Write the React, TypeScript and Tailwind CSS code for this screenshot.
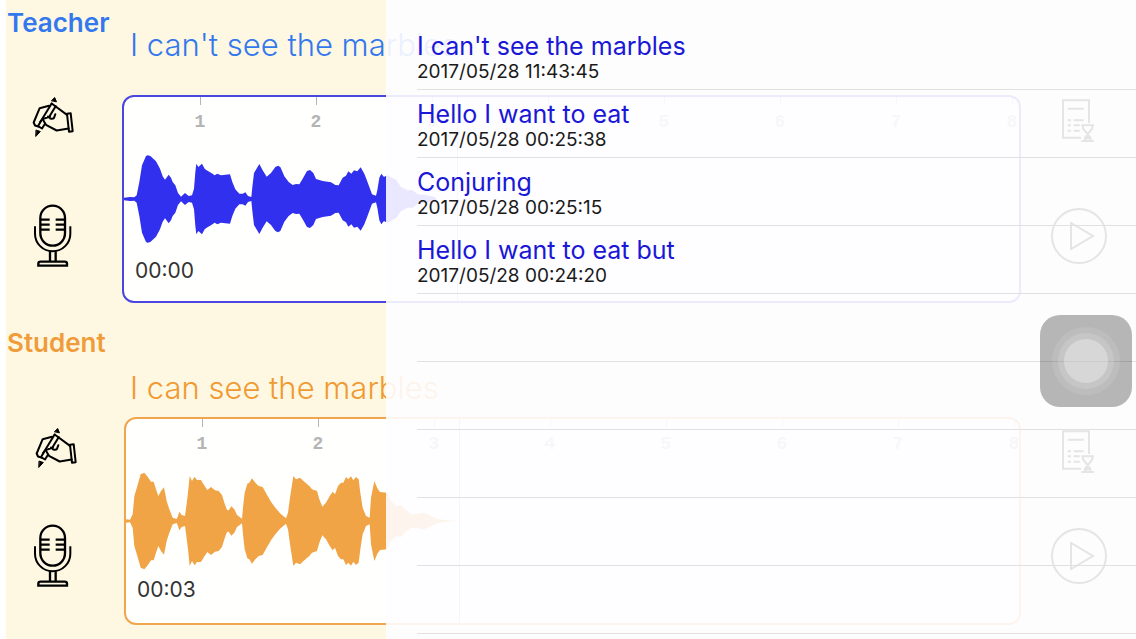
import { clsx } from "clsx";

const TEACHER_WAVE =
  "24,4 42,6 55,5 62,11 70,51 78,101 90,129 95,131 103,129 120,113 132,91 140,68 147,58 158,73 165,64 170,51 178,41 186,18 195,7 207,18 218,9 228,11 234,31 238,81 241,106 247,96 258,106 266,91 272,86 286,78 296,71 304,76 315,71 342,74 349,51 358,29 370,16 380,16 388,20 396,9 406,6 409,36 414,78 430,105 440,86 452,67 465,78 478,96 486,100 493,96 505,68 518,51 530,42 540,45 550,44 560,61 573,84 582,87 592,78 600,60 620,54 645,50 658,42 668,41 680,64 690,70 697,83 706,76 714,86 724,83 734,95 745,76 752,58 762,31 768,14 780,10 784,26 790,64 796,76 804,66 813,71 840,58 855,36 875,26 890,26 905,14 930,12 955,6 962,0";

const STUDENT_WAVE =
  "30,5 42,4 50,20 55,75 64,105 74,140 85,145 95,133 105,118 113,118 120,95 127,75 135,90 144,101 152,60 160,35 170,10 182,6 186,15 190,28 197,18 207,15 211,45 216,85 221,135 228,120 236,133 243,123 255,123 264,108 274,93 285,102 297,92 308,90 318,78 325,55 333,33 338,32 346,44 355,35 363,18 378,7 382,50 386,85 394,112 400,115 408,128 418,115 428,105 440,102 452,80 465,58 478,40 492,23 510,8 516,25 522,70 532,135 540,125 552,130 565,118 580,105 588,95 603,90 610,65 619,43 630,55 640,73 650,88 657,80 666,105 675,115 682,115 690,132 697,125 705,134 712,122 720,132 728,125 733,85 740,40 750,15 761,10 765,70 775,120 784,98 792,87 813,85 825,60 840,45 855,48 870,32 885,20 905,22 925,25 945,15 965,6 990,2 1020,1";

const recordings = [
  { title: "I can't see the marbles", date: "2017/05/28 11:43:45" },
  { title: "Hello I want to eat", date: "2017/05/28 00:25:38" },
  { title: "Conjuring", date: "2017/05/28 00:25:15" },
  { title: "Hello I want to eat but", date: "2017/05/28 00:24:20" },
];

const emptyRows = [1, 2, 3, 4, 5];
const seconds = [1, 2, 3, 4, 5, 6, 7, 8];

function HandIcon() {
  return (
    <svg viewBox="94 52 126 122" className="h-[41px] w-[42px]" fill="none" stroke="#000" strokeWidth="6" strokeLinejoin="round" strokeLinecap="round">
      <path d="M153 62l9-9 5 12z" fill="#000" strokeWidth="3" />
      <path d="M153 71l46 34" />
      <path d="M153 71l-35 57M165 79l-17 28" />
      <path d="M145 78l-28 7-18 43 4 9 10 3" />
      <path d="M121 123l-9 16 12 7 8-13" />
      <path d="M126 118l22-8M142 110l7 6q8 2 11-2l4-11" />
      <path d="M126 118l10 17 32 17 36-6" />
      <path d="M199 102l11-2 6 54-11 2z" />
      <path d="M107 151l12 4-13 14z" fill="#000" strokeWidth="3" />
    </svg>
  );
}

function MicIcon() {
  return (
    <svg viewBox="99 373 117 189" className="h-[63px] w-[39px]" fill="none" stroke="#000" strokeWidth="7">
      <rect x="121" y="378" width="74" height="120" rx="37" />
      <path d="M105 440v22a53 53 0 0 0 106 0v-22" strokeWidth="6" />
      <path d="M121 420h28M121 435h28M121 450h28M167 420h28M167 435h28M167 450h28" />
      <path d="M150 515v30M167 515v30" />
      <path d="M115 558v-6q0-6 7-6h72q7 0 7 6v6z" />
    </svg>
  );
}

function ReportIcon() {
  return (
    <svg viewBox="187 58 99 129" className="h-[43px] w-[33px]" fill="none" stroke="#000" strokeWidth="6">
      <path d="M244 174h-54v-112h78v68" />
      <path d="M204 87h48M204 122h10M222 122h30M204 137h10M222 137h18M204 153h10M222 153h18" />
      <path d="M245 137h38M245 184h38M250 137v9l22 28v10M278 137v9l-22 28v10M258 180l7-8 7 8" />
    </svg>
  );
}

function PlayIcon() {
  return (
    <svg viewBox="0 0 56 56" className="size-14" fill="none" stroke="#000" strokeWidth="2">
      <circle cx="28" cy="28" r="27" />
      <path d="M20 15v26l22-13z" />
    </svg>
  );
}

function Waveform({ points, start, className }: { points: string; start: number; className: string }) {
  const top = points.split(" ").map((point) => point.split(",").map(Number));
  const outline = [
    ...top.map(([x, amp]) => `${x},${-amp}`),
    ...top.reverse().map(([x, amp]) => `${x},${amp}`),
  ].join(" ");

  return (
    <svg viewBox={`${start} -150 1050 300`} className={clsx("block h-[100px] w-[350px]", className)}>
      <polygon points={outline} />
    </svg>
  );
}

type TrackProps = {
  name: string;
  sentence: string;
  time: string;
  points: string;
  start: number;
  sectionClass: string;
  nameClass: string;
  railClass: string;
  editClass: string;
  titleClass: string;
  panelClass: string;
  waveClass: string;
  timeClass: string;
  reportClass: string;
};

function Track(props: TrackProps) {
  return (
    <section className={clsx("flex", props.sectionClass)}>
      <div className={clsx("flex h-[267px] shrink-0 flex-col", props.railClass)}>
        <h2 className={clsx("pt-2 pl-px text-[26px] leading-[30px] font-semibold", props.nameClass)}>{props.name}</h2>
        <button type="button" aria-label={`Edit ${props.name}`} className={clsx("self-start", props.editClass)}>
          <HandIcon />
        </button>
        <button type="button" aria-label={`Record ${props.name}`} className="mt-auto ml-[27px] self-start">
          <MicIcon />
        </button>
      </div>

      <div className="min-w-0 flex-1">
        <p className={clsx("text-[31px] leading-10 font-light whitespace-nowrap", props.titleClass)}>{props.sentence}</p>
        <div className={clsx("relative h-52 overflow-hidden rounded-xl border-2 bg-[#fffffd]", props.panelClass)}>
          <div className="flex h-[52px] pl-[18px]">
            {seconds.map((second) => (
              <div key={second} className="flex w-29 shrink-0 flex-col items-center">
                <span className="h-2 w-px bg-[#b4b4b4]" />
                <span className="mt-[7px] font-['Liberation_Mono',monospace] text-lg leading-5 font-bold text-[#b4b4b4]">{second}</span>
              </div>
            ))}
          </div>
          <Waveform points={props.points} start={props.start} className={props.waveClass} />
          <time className={clsx("ml-[11px] block text-[21px] leading-7 text-[#333]", props.timeClass)}>{props.time}</time>
          <span className="absolute inset-y-0 left-[333px] w-px bg-[#aaa]" />
        </div>
      </div>

      <div className="flex h-[264px] w-[115px] shrink-0 flex-col items-center">
        <button type="button" aria-label={`${props.name} report`} className={props.reportClass}>
          <ReportIcon />
        </button>
        <button type="button" aria-label={`Play ${props.name}`} className="mt-auto">
          <PlayIcon />
        </button>
      </div>
    </section>
  );
}

function HistoryDrawer() {
  return (
    <aside className="absolute inset-y-0 right-0 w-[750px] overflow-hidden bg-[#fefdff]/90 pt-[22px] pl-[31px]">
      <ul>
        {recordings.map((item) => (
          <li key={item.date} className="h-17 border-b border-[#e2e0e0]">
            <button type="button" className="block w-full pt-[10px] text-left">
              <span className="block text-[25px] leading-7 text-[#1a17d6]">{item.title}</span>
              <span className="block text-[19px] leading-6 text-[#1a1a1a]">{item.date}</span>
            </button>
          </li>
        ))}
        {emptyRows.map((row) => (
          <li key={row} className="h-17 border-b border-[#e2e0e0]" />
        ))}
      </ul>
    </aside>
  );
}

function AssistiveTouch() {
  return (
    <button
      type="button"
      aria-label="Assistive touch"
      className="absolute top-[315px] right-1 flex size-23 items-center justify-center rounded-[20px] bg-black/28"
    >
      <span className="flex size-17 items-center justify-center rounded-full bg-white/10">
        <span className="flex size-14 items-center justify-center rounded-full bg-white/15">
          <span className="size-11 rounded-full bg-white/30" />
        </span>
      </span>
    </button>
  );
}

export default function App() {
  return (
    <div className="relative min-h-screen overflow-hidden bg-white pl-1.5 font-['Inter',sans-serif]">
      <main className="flex min-h-screen flex-col bg-[#fef8e3]">
        <Track
          name="Teacher"
          sentence="I can't see the marbles"
          time="00:00"
          points={TEACHER_WAVE}
          start={24}
          sectionClass="h-80"
          nameClass="text-[#3478ee]"
          railClass="w-29"
          editClass="mt-[59px] ml-[26px]"
          titleClass="pt-[25px] pb-[30px] pl-2 text-[#3478ee]"
          panelClass="border-[#4a46e0]"
          waveClass="fill-[#3130ee]"
          timeClass="mt-2"
          reportClass="mt-[99px]"
        />
        <Track
          name="Student"
          sentence="I can see the marbles"
          time="00:03"
          points={STUDENT_WAVE}
          start={30}
          sectionClass="flex-1"
          nameClass="text-[#f09c3a]"
          railClass="w-[118px]"
          editClass="mt-[70px] ml-[29px]"
          titleClass="pt-12 pb-[9px] pl-1.5 text-[#f09a32]"
          panelClass="border-[#f0a64e]"
          waveClass="fill-[#f0a446]"
          timeClass="mt-[5px]"
          reportClass="mt-[110px]"
        />
      </main>
      <HistoryDrawer />
      <AssistiveTouch />
    </div>
  );
}
